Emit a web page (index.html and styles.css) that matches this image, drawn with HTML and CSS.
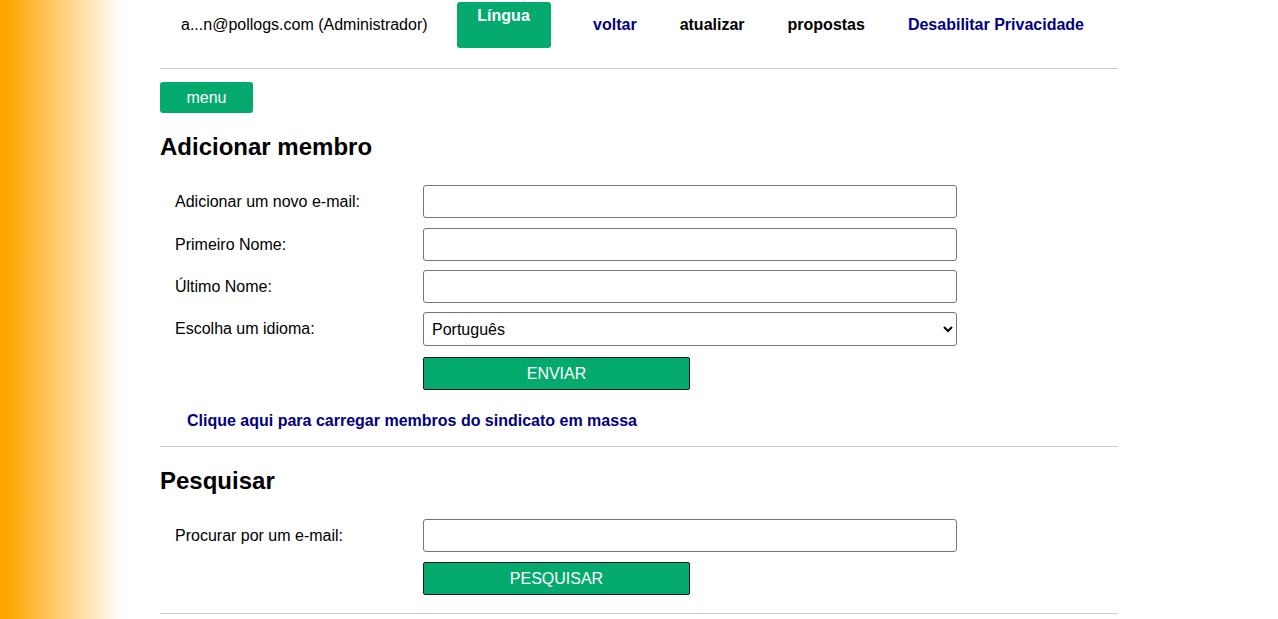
FILE: index.html
```html
<!DOCTYPE html>
<html lang="pt">
<head>
<meta charset="utf-8">
<title>Adicionar membro</title>
<link rel="stylesheet" href="styles.css">
</head>
<body>
<div class="page">
  <header class="topbar">
    <span class="user">a...n@pollogs.com (Administrador)</span>
    <button class="btn lang">Língua</button>
    <a class="nav navy" href="#">voltar</a>
    <a class="nav" href="#">atualizar</a>
    <a class="nav" href="#">propostas</a>
    <a class="nav navy" href="#">Desabilitar Privacidade</a>
  </header>
  <hr class="rule">
  <button class="btn menu">menu</button>

  <h2 class="title">Adicionar membro</h2>
  <form class="grid">
    <label class="lbl" for="email">Adicionar um novo e-mail:</label>
    <input class="field first" id="email" type="text">
    <label class="lbl" for="first">Primeiro Nome:</label>
    <input class="field" id="first" type="text">
    <label class="lbl" for="last">Último Nome:</label>
    <input class="field" id="last" type="text">
    <label class="lbl" for="lang">Escolha um idioma:</label>
    <select class="field sel" id="lang"><option>Português</option></select>
    <span></span>
    <button type="button" class="btn submit send">ENVIAR</button>
  </form>
  <a class="bulk" href="#">Clique aqui para carregar membros do sindicato em massa</a>
  <hr class="rule r2">

  <h2 class="title t2">Pesquisar</h2>
  <form class="grid">
    <label class="lbl" for="search">Procurar por um e-mail:</label>
    <input class="field" id="search" type="text">
    <span></span>
    <button type="button" class="btn submit search">PESQUISAR</button>
  </form>
  <hr class="rule r3">
</div>
</body>
</html>
```

FILE: styles.css
```css
html {
  background: linear-gradient(to right, #ffa500 8px, #ffffff 122px);
  min-height: 100%;
}
body {
  margin: 0;
  font-family: "Liberation Sans", Arial, sans-serif;
  font-size: 16px;
  color: #000;
}
.page {
  margin-left: 160px;
  width: 958px;
}
.topbar {
  display: flex;
  align-items: flex-start;
  height: 66px;
  padding-top: 2px;
}
.user {
  margin-top: 14px;
  line-height: 18px;
  padding-left: 21px;
  padding-right: 29px;
}
.btn {
  font-family: "Liberation Sans", Arial, sans-serif;
  font-size: 16px;
  color: #fff;
  background: #04aa6d;
  border: none;
  cursor: pointer;
}
.lang {
  width: 94px;
  height: 46px;
  border-radius: 3px;
  padding: 5px 0 0;
  font-weight: bold;
  line-height: 18px;
  display: flex;
  justify-content: center;
  align-items: flex-start;
  margin-right: 21px;
}
.nav {
  margin-top: 14px;
  line-height: 18px;
  padding: 0 21.5px;
  font-weight: bold;
  color: #000;
  text-decoration: none;
}
.nav.navy { color: #000080; }
.rule {
  border: none;
  border-top: 1px solid #cccccc;
  margin: 0;
  height: 0;
}
.menu {
  display: block;
  margin-top: 13px;
  width: 93px;
  height: 31px;
  border-radius: 3px;
  padding: 0;
  line-height: 31px;
}
.title {
  margin: 20px 0 0;
  font-size: 24px;
  line-height: 28px;
  font-weight: bold;
}
.grid {
  display: grid;
  grid-template-columns: 248px 534px;
  row-gap: 9px;
  margin-top: 24px;
  padding-left: 15px;
  align-items: center;
}
.lbl {
  line-height: 18px;
}
.field {
  box-sizing: border-box;
  height: 33px;
  border: 1px solid #767676;
  border-radius: 3px;
  background: #fff;
  font-family: "Liberation Sans", Arial, sans-serif;
  font-size: 16px;
  padding: 0 8px;
  margin: 0;
}
.field.first { margin-bottom: 1px; }
.sel {
  height: 34px;
  color: #000;
  padding: 0 4px;
}
.submit {
  box-sizing: border-box;
  width: 267px;
  height: 33px;
  border: 1px solid #1a1a1a;
  border-radius: 2px;
  padding: 0;
}
.send { margin-top: 2px; }
.search { margin-top: 1px; }
.bulk {
  display: block;
  margin: 22px 0 0 27px;
  line-height: 18px;
  font-weight: bold;
  color: #000080;
  text-decoration: none;
}
.r2 { margin-top: 16px; }
.t2 { margin-top: 20px; }
.r3 { margin-top: 18px; }
```
